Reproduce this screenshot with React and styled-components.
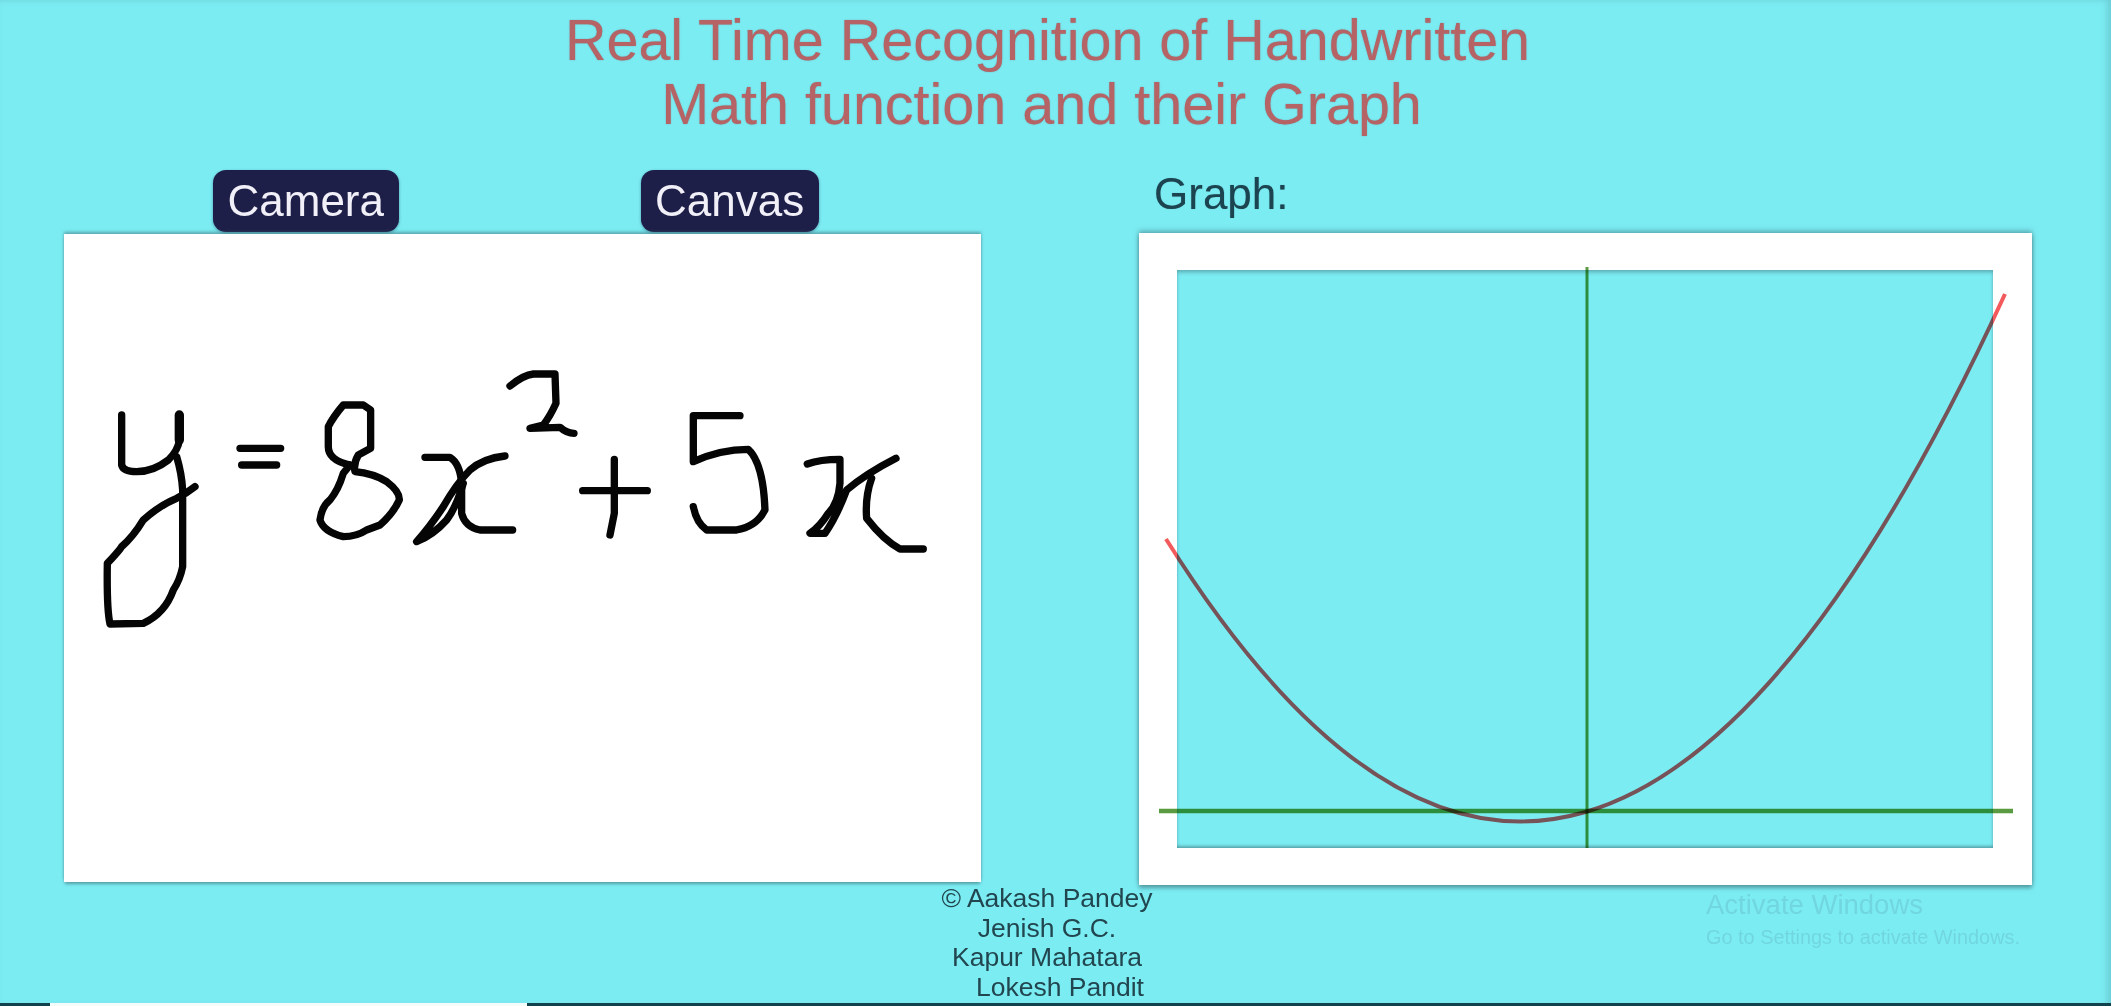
import React from "react";
import styled, { createGlobalStyle } from "styled-components";

const Global = createGlobalStyle`
  html, body { margin: 0; padding: 0; background: #fff; overflow: hidden; }
  body { font-family: "Liberation Sans", Arial, sans-serif; }
`;

const Page = styled.div`
  position: relative;
  width: 2111px;
  height: 1006px;
  background: #7cecf3;
  box-shadow: inset -4px 0 6px rgba(70, 130, 140, 0.28);
  display: flex;
  flex-direction: column;
  overflow: hidden;
  filter: blur(0.55px);
`;

const Title = styled.h1`
  margin: 0;
  padding: 8px 0 0;
  height: 170px;
  box-sizing: border-box;
  font-size: 57.5px;
  line-height: 64px;
  font-weight: 400;
  color: #b56364;
  text-align: center;
  text-shadow: 0 0 1.5px rgba(110, 110, 120, 0.55);
`;

const TitleLine = styled.div`
  transform: translateX(${(p) => p.$shift}px);
`;

const Main = styled.main`
  display: flex;
  align-items: flex-start;
  padding-left: 64px;
  gap: 158px;
`;

const LeftColumn = styled.section`
  width: 917px;
  display: flex;
  flex-direction: column;
`;

const Tabs = styled.nav`
  display: flex;
  height: 64px;
  padding-left: 149px;
  gap: 242px;
`;

const Tab = styled.button`
  height: 62px;
  padding: 0 14.5px;
  border: 0;
  border-radius: 13px;
  background: #1e1f48;
  color: #f1f0f8;
  font: 400 44px/1 "Liberation Sans", Arial, sans-serif;
  box-shadow: 0 1px 3px rgba(30, 40, 80, 0.45);
`;

const CanvasCard = styled.div`
  height: 648px;
  background: #fff;
  box-shadow: 0 -2px 3px rgba(60, 110, 115, 0.55), 0 3px 3px -1px rgba(60, 110, 115, 0.6);
`;

const Ink = styled.svg`
  display: block;
  width: 100%;
  height: 100%;
  fill: none;
  stroke: #050505;
  stroke-linecap: round;
  stroke-linejoin: round;
`;

const RightColumn = styled.section`
  width: 893px;
  display: flex;
  flex-direction: column;
`;

const GraphLabel = styled.div`
  height: 63px;
  padding: 1px 0 0 15px;
  box-sizing: border-box;
  font-size: 44px;
  line-height: 46px;
  color: #1b4350;
  text-shadow: 0 0 1px rgba(30, 70, 80, 0.4);
`;

const GraphCard = styled.div`
  height: 652px;
  box-sizing: border-box;
  padding: 37px 39px 37px 38px;
  background: #fff;
  box-shadow: 0 -2px 5px rgba(60, 110, 115, 0.55), 0 3px 4px rgba(60, 110, 115, 0.6);
`;

const Plot = styled.div`
  height: 100%;
  background: #7cecf3;
  box-shadow: inset 0 3px 4px -1px rgba(60, 110, 115, 0.55), inset 0 -3px 3px -1px rgba(60, 110, 115, 0.55);
`;

const Chart = styled.svg`
  display: block;
  width: 100%;
  height: 100%;
  overflow: visible;
  fill: none;
`;

const Axis = styled.line`
  stroke: #5a9a40;
  mix-blend-mode: multiply;
  stroke-width: ${(p) => p.$weight}px;
`;

const Curve = styled.path`
  stroke: #f25a5c;
  stroke-width: 4px;
  mix-blend-mode: multiply;
`;

const Credits = styled.footer`
  position: absolute;
  left: 0;
  top: 884px;
  width: 2094px;
  text-align: center;
  font-size: 26.5px;
  line-height: 29.5px;
  color: #22464f;
`;

const Credit = styled.div`
  padding-left: ${(p) => p.$indent || 0}px;
`;

const Watermark = styled.aside`
  position: absolute;
  left: 1706px;
  top: 890px;
  color: rgba(80, 150, 165, 0.26);
`;

const WatermarkTitle = styled.div`
  font-size: 27.5px;
  line-height: 30px;
`;

const WatermarkText = styled.div`
  font-size: 19.9px;
  line-height: 24px;
  margin-top: 5px;
`;

const BottomBar = styled.div`
  position: absolute;
  left: 0;
  right: 0;
  bottom: 0;
  height: 3px;
  display: flex;
`;

const BarPart = styled.div`
  flex: ${(p) => (p.$width ? `0 0 ${p.$width}px` : "1")};
  background: ${(p) => p.$color};
`;

function Handwriting() {
  return (
    <Ink viewBox="64 234 917 648">
      <g transform="translate(80 350) scale(0.3333)" strokeWidth="22">
        <path d="M125 195 L125 345 Q130 365 170 365 Q220 365 265 330 Q295 300 298 270 L298 195" />
        <path d="M298 195 L298 270" strokeWidth="28" />
        <path d="M290 320 Q305 370 308 420 L308 650 Q300 690 280 720 Q255 790 190 820 L90 822 Q80 780 82 640 Q120 600 125 590 Q160 560 190 510 Q240 465 290 445 Q320 430 345 410" />
        <path d="M480 295 L602 295 M485 345 L590 345" />
        <path d="M810 345 Q745 330 745 290 L745 230 Q760 200 790 165 L850 165 L872 180 L872 295 L835 315 Q820 340 825 365 Q880 370 920 395 Q960 425 958 450 Q940 490 900 525 L860 540 Q830 560 790 560 Q730 545 720 510 Q725 470 750 450 Q775 420 790 370 L810 345" />
        <path d="M1035 322 L1110 322 Q1140 340 1145 400 L1145 490 Q1155 530 1200 540 L1298 540" />
        <path d="M1275 318 Q1210 325 1170 360 Q1130 400 1090 470 Q1050 530 1010 575 Q1060 555 1100 510 Q1130 470 1150 400" />
      </g>
      <g transform="translate(500 350) scale(0.3333)" strokeWidth="22">
        <path d="M30 108 Q70 75 100 72 L165 72 L168 160 Q150 200 130 225 L90 235 L180 232 Q200 250 222 250" />
        <path d="M248 422 L442 422 M343 328 L343 490 L330 555" />
        <path d="M720 197 L580 197 L580 335 Q660 298 745 298 Q790 340 795 480 Q770 530 710 540 L620 540 Q590 520 580 470" />
        <path d="M922 342 Q960 328 1020 328 L1020 400 Q1015 460 985 490 Q960 530 930 550 L975 550 Q1010 500 1040 420 Q1100 370 1188 325" />
        <path d="M1115 385 Q1095 440 1100 505 Q1150 570 1200 597 L1270 597" />
      </g>
    </Ink>
  );
}

function Graph() {
  return (
    <Chart viewBox="1177 270 816 578">
      <Axis x1="1587" y1="267" x2="1587" y2="848" $weight={3} />
      <Axis x1="1159" y1="811" x2="2013" y2="811" $weight={4.5} />
      <Curve d="M1166 539 Q1585.5 1207.5 2005 294" />
    </Chart>
  );
}

export default function App() {
  return (
    <Page>
      <Global />
      <Title>
        <TitleLine $shift={-8}>Real Time Recognition of Handwritten</TitleLine>
        <TitleLine $shift={-14}>Math function and their Graph</TitleLine>
      </Title>
      <Main>
        <LeftColumn>
          <Tabs>
            <Tab>Camera</Tab>
            <Tab>Canvas</Tab>
          </Tabs>
          <CanvasCard>
            <Handwriting />
          </CanvasCard>
        </LeftColumn>
        <RightColumn>
          <GraphLabel>Graph:</GraphLabel>
          <GraphCard>
            <Plot>
              <Graph />
            </Plot>
          </GraphCard>
        </RightColumn>
      </Main>
      <Credits>
        <Credit>© Aakash Pandey</Credit>
        <Credit>Jenish G.C.</Credit>
        <Credit>Kapur Mahatara</Credit>
        <Credit $indent={26}>Lokesh Pandit</Credit>
      </Credits>
      <Watermark>
        <WatermarkTitle>Activate Windows</WatermarkTitle>
        <WatermarkText>Go to Settings to activate Windows.</WatermarkText>
      </Watermark>
      <BottomBar>
        <BarPart $width={50} $color="#12424c" />
        <BarPart $width={477} $color="#f4fbfb" />
        <BarPart $color="#12424c" />
      </BottomBar>
    </Page>
  );
}
